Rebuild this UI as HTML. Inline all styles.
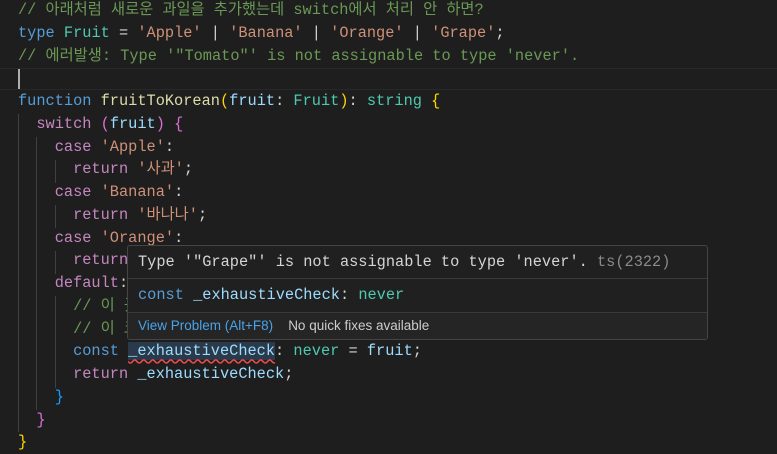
<!DOCTYPE html>
<html><head><meta charset="utf-8"><style>
body{margin:0;background:#1e1e1e;width:777px;height:453px;overflow:hidden;position:relative;font-family:"Liberation Mono","Noto Sans CJK KR",monospace;font-size:15.3px;color:#d4d4d4}
.l{position:absolute;left:18px;height:22.75px;line-height:22.75px;white-space:pre}
.c{color:#6a9955}.k{color:#569cd6}.t{color:#4ec9b0}.s{color:#ce9178}.p{color:#c586c0}.f{color:#dcdcaa}.v{color:#9cdcfe}
.g{color:#ffd700}.m{color:#da70d6}.b{color:#179fff}
.guide{position:absolute;width:1px;background:#404040}
#tip{position:absolute;left:127px;top:245px;width:579px;height:93px;background:#202020;border:1px solid #454545;border-radius:3px;overflow:hidden}
.row{position:absolute;left:0;right:0;padding-left:10px;white-space:pre}
</style></head><body>
<div style="position:absolute;left:0;top:68px;width:777px;height:22px;border-top:1px solid #282828;border-bottom:1px solid #282828;box-sizing:border-box"></div>
<div style="position:absolute;left:18px;top:69px;width:2px;height:20px;background:#aeafad"></div>
<div class="guide" style="left:18px;top:114px;height:318px"></div>
<div class="guide" style="left:36px;top:137px;height:273px"></div>
<div class="guide" style="left:55px;top:160px;height:23px"></div>
<div class="guide" style="left:55px;top:205px;height:23px"></div>
<div class="guide" style="left:55px;top:251px;height:23px"></div>
<div class="guide" style="left:55px;top:296px;height:92px"></div>
<div class="l c" style="top:-1px">// 아래처럼 새로운 과일을 추가했는데 switch에서 처리 안 하면?</div>
<div class="l" style="top:21.75px"><span class="k">type</span> <span class="t">Fruit</span> = <span class="s">'Apple'</span> | <span class="s">'Banana'</span> | <span class="s">'Orange'</span> | <span class="s">'Grape'</span>;</div>
<div class="l c" style="top:44.5px">// 에러발생: Type '"Tomato"' is not assignable to type 'never'.</div>
<div class="l" style="top:90px"><span class="k">function</span> <span class="f">fruitToKorean</span><span class="g">(</span><span class="v">fruit</span>: <span class="t">Fruit</span><span class="g">)</span>: <span class="t">string</span> <span class="g">{</span></div>
<div class="l" style="top:112.75px">  <span class="p">switch</span> <span class="m">(</span><span class="v">fruit</span><span class="m">)</span> <span class="m">{</span></div>
<div class="l" style="top:135.5px">    <span class="p">case</span> <span class="s">'Apple'</span>:</div>
<div class="l" style="top:158.25px">      <span class="p">return</span> <span class="s">'사과'</span>;</div>
<div class="l" style="top:181px">    <span class="p">case</span> <span class="s">'Banana'</span>:</div>
<div class="l" style="top:203.75px">      <span class="p">return</span> <span class="s">'바나나'</span>;</div>
<div class="l" style="top:226.5px">    <span class="p">case</span> <span class="s">'Orange'</span>:</div>
<div class="l" style="top:249.25px">      <span class="p">return</span> <span class="s">'오렌지'</span>;</div>
<div class="l" style="top:272px">    <span class="p">default</span>:</div>
<div class="l c" style="top:294.75px">      // 이 곳에 도달하면 에러</div>
<div class="l c" style="top:317.5px">      // 이 코드는 실행되지 않음</div>
<div class="l" style="top:340.25px">      <span class="k">const</span> <span class="v" style="background:#2b3a4a;text-decoration:underline wavy #f14c4c;text-underline-offset:3px">_exhaustiveCheck</span>: <span class="t">never</span> = <span class="v">fruit</span>;</div>
<div class="l" style="top:363px">      <span class="p">return</span> <span class="v">_exhaustiveCheck</span>;</div>
<div class="l" style="top:385.75px">    <span class="b">}</span></div>
<div class="l" style="top:408.5px">  <span class="m">}</span></div>
<div class="l" style="top:431.25px"><span class="g">}</span></div>
<div id="tip">
<div class="row" style="top:0;height:32px;line-height:33px;border-bottom:1px solid #3a3a3a">Type '"Grape"' is not assignable to type 'never'. <span style="color:#8a8a8a">ts(2322)</span></div>
<div class="row" style="top:33px;height:33px;line-height:33px;border-bottom:1px solid #3a3a3a"><span class="k">const</span> <span class="v">_exhaustiveCheck</span>: <span class="t">never</span></div>
<div class="row" style="top:67px;height:28px;line-height:26px;background:#252526;font-family:'Liberation Sans',sans-serif;font-size:13.5px"><span style="color:#4aa2e8">View Problem (Alt+F8)</span>    <span style="color:#cccccc">No quick fixes available</span></div>
</div>
</body></html>
